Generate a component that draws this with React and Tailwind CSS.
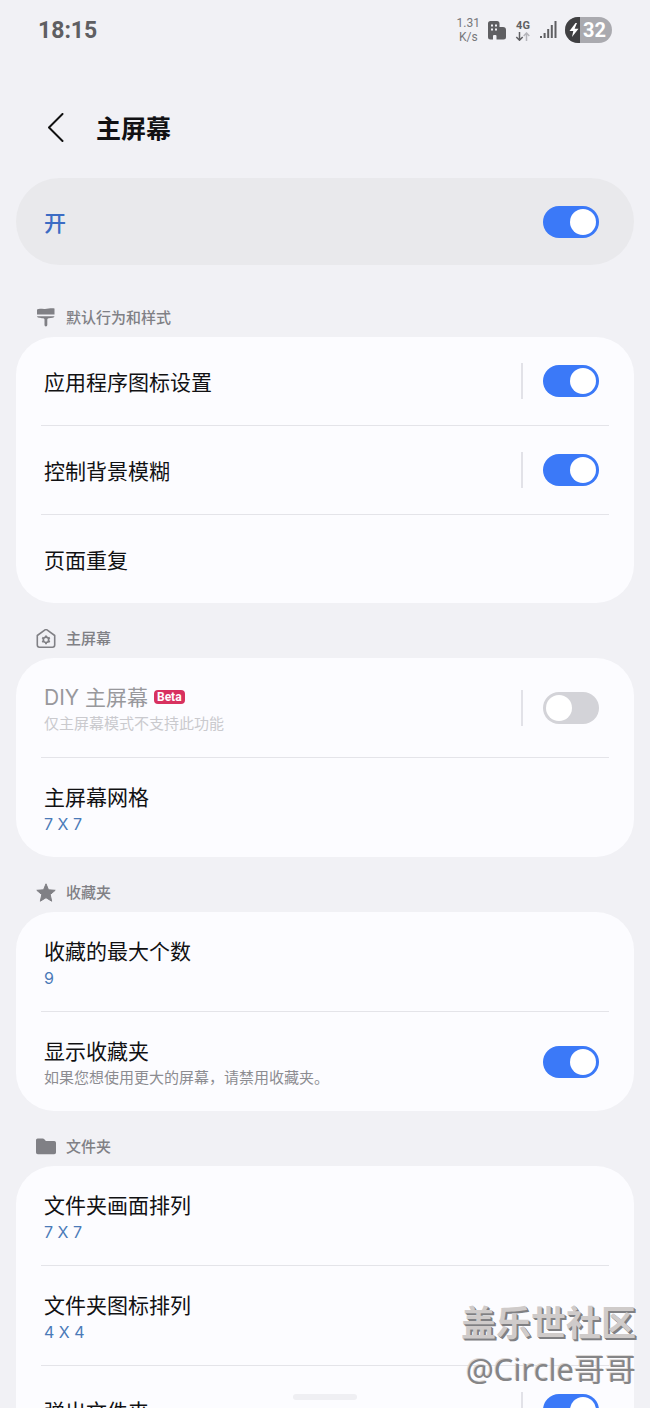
import React from 'react';

const BrushIcon = () => (
    <svg width="20" height="20" viewBox="0 0 20 20" fill="currentColor">
        <path d="M1 1.400C3.500.2 6 1.200 9 1S15-.2 18.500.4V6.600H1z" />
        <path d="M1 8.200h17.500c-.2 1.600-2.600 1.800-6 2.100-.8.100-1.200.5-1.200 1.200v5.500a1.400 1.400 0 0 1-2.800 0v-5.500c0-.7-.4-1.100-1.200-1.200C3.800 10 1.200 9.800 1 8.200z" />
    </svg>
);

const HomeGearIcon = () => (
    <svg width="20" height="20" viewBox="0 0 20 20" fill="none" stroke="currentColor" strokeLinejoin="round">
        <path strokeWidth="1.600" d="M1.300 6.500 9 .9q1-.7 2 0l7.700 5.600v9.500q0 2.200-2.200 2.200h-13q-2.200 0-2.200-2.200z" />
        <circle cx="10" cy="10.800" r="2.700" strokeWidth="1.700" />
        <path strokeWidth="1.900" d="M10 6.400v1.800M10 13.400v1.800M6.200 8.600l1.500.9M12.300 12.100l1.500.9M6.200 13l1.500-.9M12.300 9.500l1.500-.9" />
    </svg>
);

const StarIcon = () => (
    <svg width="20" height="20" viewBox="0 0 20 20" fill="currentColor" stroke="currentColor" strokeLinejoin="round">
        <path d="M10 .8l2.500 6 6.700.5-5 4.300 1.500 6.600L10 14.700l-5.700 3.500 1.500-6.600-5-4.300 6.700-.5z" />
    </svg>
);

const FolderIcon = () => (
    <svg width="20" height="20" viewBox="0 0 20 20" fill="currentColor">
        <path d="M0 3Q0 1.400 1.600 1.400h5.200q.8 0 1.300.6l1.300 1.400q.5.500 1.200.5h7.600Q20 3.900 20 5.700v9.700q0 1.800-1.800 1.800H1.800Q0 17.200 0 15.400z" />
    </svg>
);

const sections = [
    {
        id: 'style',
        title: '默认行为和样式',
        icon: BrushIcon,
        items: [
            { id: 'app-icons', name: '应用程序图标设置', toggle: true, on: true, split: true },
            { id: 'blur', name: '控制背景模糊', toggle: true, on: true, split: true },
            { id: 'page-loop', name: '页面重复' },
        ],
    },
    {
        id: 'home',
        title: '主屏幕',
        icon: HomeGearIcon,
        items: [
            { id: 'diy', name: 'DIY 主屏幕', beta: true, note: '仅主屏幕模式不支持此功能', toggle: true, split: true, disabled: true },
            { id: 'home-grid', name: '主屏幕网格', value: '7 X 7' },
        ],
    },
    {
        id: 'favorites',
        title: '收藏夹',
        icon: StarIcon,
        items: [
            { id: 'fav-max', name: '收藏的最大个数', value: '9' },
            { id: 'fav-show', name: '显示收藏夹', note: '如果您想使用更大的屏幕，请禁用收藏夹。', toggle: true, on: true },
        ],
    },
    {
        id: 'folders',
        title: '文件夹',
        icon: FolderIcon,
        items: [
            { id: 'folder-grid', name: '文件夹画面排列', value: '7 X 7' },
            { id: 'folder-icons', name: '文件夹图标排列', value: '4 X 4' },
            { id: 'folder-popup', name: '弹出文件夹', toggle: true, on: true, split: true },
        ],
    },
];

const Toggle = ({ id, on, disabled }) => (
    <input
        id={id}
        type="checkbox"
        role="switch"
        defaultChecked={on}
        disabled={disabled}
        className="h-8 w-14 shrink-0 appearance-none rounded-full bg-[#d3d3d8] p-[3px] before:block before:size-[26px] before:rounded-full before:bg-white checked:bg-[#3b79f8] checked:before:ml-6"
    />
);

const Row = ({ item }) => {
    const twoLines = item.value || item.note;
    return (
        <li className="border-b border-[#e4e4e9] last:border-b-0">
            <div className={twoLines ? 'flex items-center pt-6 pr-2.5 pb-[23px] pl-[3px]' : 'flex h-[88px] items-center pr-2.5 pl-[3px]'}>
                <div className={twoLines ? 'min-w-0 flex-1' : 'min-w-0 flex-1 pt-1'}>
                    <div className="flex items-start gap-1.5">
                        {item.toggle ? (
                            <label htmlFor={item.id} className={item.disabled ? 'text-[21px] leading-8 text-[#98989c]' : 'text-[21px] leading-8 text-[#111113]'}>
                                {item.name}
                            </label>
                        ) : (
                            <button className="text-[21px] leading-8 text-[#111113]">{item.name}</button>
                        )}
                        {item.beta && (
                            <span className="mt-2 rounded bg-[#d8315f] px-[3px] font-[Roboto,sans-serif] text-[12px] leading-[14px] font-bold text-white">Beta</span>
                        )}
                    </div>
                    {item.value && <p className="text-[16px] leading-5 text-[#4a7ab8]">{item.value}</p>}
                    {item.note && (
                        <p className={item.disabled ? 'text-[15px] leading-5 text-[#cacace]' : 'text-[15px] leading-5 text-[#8c8c91]'}>{item.note}</p>
                    )}
                </div>
                {item.split && <span className="mr-5 h-9 w-0.5 bg-[#e2e2e8]" />}
                {item.toggle && <Toggle id={item.id} on={item.on} disabled={item.disabled} />}
            </div>
        </li>
    );
};

const StatusBar = () => (
    <div className="flex h-[60px] shrink-0 items-center justify-between px-[38px] font-[Roboto,sans-serif] text-[#5f5f62]">
        <span className="pt-0.5 text-[23px] leading-7 font-bold">18:15</span>
        <div className="flex items-center gap-2">
            <div className="text-center text-[12px] leading-[14px] text-[#77777b]">
                <div>1.31</div>
                <div>K/s</div>
            </div>
            <svg width="18" height="19" viewBox="0 0 18 19">
                <path fill="currentColor" d="M0 2.500Q0 0 2.500 0h6.500q2.500 0 2.500 2.500V6H15q3 0 3 3v7q0 2.500-2.500 2.500H8.500V15q0-1-1-1H6q-1 0-1 1v3.500H2.500Q0 18.500 0 16z" />
                <path stroke="#f1f1f5" strokeWidth="2" d="M3 4.500h2M7 4.500h2M3 8.500h2M7 8.500h2" />
            </svg>
            <div className="flex w-[18px] flex-col items-center">
                <span className="text-[11px] leading-3 font-bold">4G</span>
                <svg width="16" height="9" viewBox="0 0 16 9" fill="none" strokeWidth="1.500">
                    <path stroke="currentColor" d="M4.500 0v8M1.300 5l3.200 3.200L7.700 5" />
                    <path stroke="#b5b5ba" d="M11.500 9V1M8.700 4l2.800-3 2.800 3" />
                </svg>
            </div>
            <svg width="17" height="18" viewBox="0 0 17 18" fill="currentColor">
                <path d="M0 15h2v2H0zM3.600 12h2v5h-2zM7.200 8h2v9h-2zM10.800 4h2v13h-2zM14.500 0h2v17h-2z" />
            </svg>
            <div className="flex h-[26px] w-[47px] items-stretch overflow-hidden rounded-full bg-[#aaaaaf]">
                <div className="flex w-[15px] items-center justify-end bg-[#404042]">
                    <svg width="11" height="14" viewBox="0 0 11 14" fill="#fff">
                        <path d="M6.500 0 .5 8h3.800L3 14l6.500-8.200H5.600L8 0z" />
                    </svg>
                </div>
                <span className="pl-[3px] text-[20px] leading-[26px] font-bold text-white">32</span>
            </div>
        </div>
    </div>
);

const App = () => {
    return (
        <div className="relative flex h-screen flex-col overflow-hidden bg-[#f1f1f5] font-[Inter,'Noto_Sans_CJK_SC',sans-serif]">
            <StatusBar />
            <main className="min-h-0 flex-1 overflow-y-auto px-4 [scrollbar-width:none]">
                <header className="flex items-center gap-8 pt-8 pb-3.5 pl-8">
                    <button aria-label="返回" className="flex h-[72px] items-center">
                        <svg width="16" height="30" viewBox="0 0 16 30" fill="none" stroke="#111" strokeWidth="2" strokeLinecap="round" strokeLinejoin="round">
                            <path d="M14.500 1 1 14.500l13.500 13.500" />
                        </svg>
                    </button>
                    <h1 className="pt-0.5 text-[25px] leading-9 font-bold text-[#111113]">主屏幕</h1>
                </header>

                <div className="flex h-[87px] items-center justify-between rounded-full bg-[#e9e9ec] pr-[35px] pl-7">
                    <label htmlFor="master" className="pt-0.5 text-[22px] leading-8 font-medium text-[#3c6cc4]">开</label>
                    <Toggle id="master" on />
                </div>

                <div className="pt-[17px]">
                    {sections.map(({ id, title, icon: Icon, items }) => (
                        <section key={id}>
                            <h2 className="flex items-center gap-2.5 pt-6 pb-[7px] pl-5 text-[15px] leading-6 font-medium text-[#808085]">
                                <Icon />
                                {title}
                            </h2>
                            <ul className="rounded-[38px] bg-[#fcfcff] px-[25px]">
                                {items.map(item => (
                                    <Row key={item.id} item={item} />
                                ))}
                            </ul>
                        </section>
                    ))}
                </div>
            </main>

            {/* gesture handle */}
            <div className="pointer-events-none absolute inset-x-0 bottom-2 flex justify-center">
                <div className="h-1.5 w-16 rounded-full bg-[#efeff3]" />
            </div>

            {/* community stamp */}
            <div className="pointer-events-none absolute right-3.5 bottom-4 text-right">
                <div className="text-[35px] leading-[46px] font-bold text-[#cfcbca] [text-shadow:1px_1px_0_#808083,2px_2px_0_#808083]">盖乐世社区</div>
                <div className="font-['Noto_Sans','Noto_Sans_CJK_SC',sans-serif] text-[31px] leading-[46px] text-[#858587] [text-shadow:-1px_-1px_0_#dcd8d6]">@Circle哥哥</div>
            </div>
        </div>
    );
};

export default App;
